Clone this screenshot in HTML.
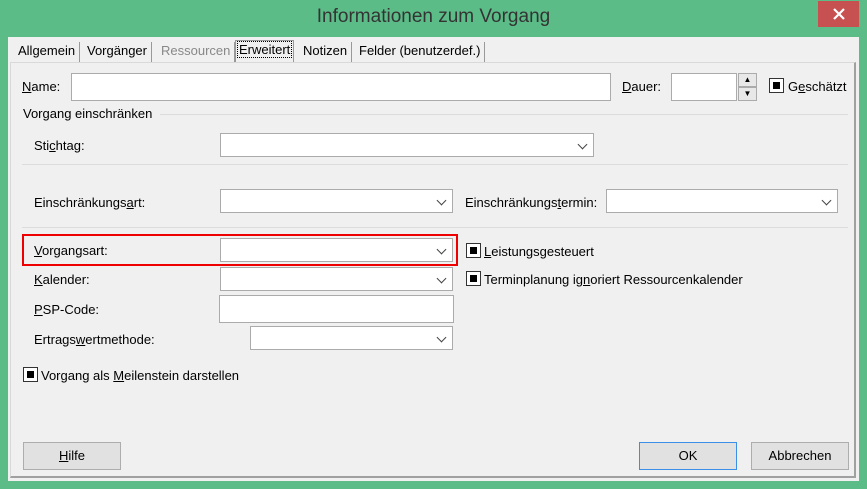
<!DOCTYPE html>
<html><head><meta charset="utf-8"><style>
*{margin:0;padding:0;box-sizing:border-box}
body{width:867px;height:489px;background:#5cbc88;font-family:"Segoe UI","Liberation Sans",sans-serif;font-size:12.5px;color:#000;position:relative;overflow:hidden}
.a{position:absolute}
.title{left:0;top:6px;width:867px;text-align:center;font-size:19px;color:#333}
.close{left:818px;top:1px;width:41px;height:26px;background:#c75050;color:#fff;text-align:center;font-size:16px;line-height:26px}
.client{left:8px;top:37px;width:851px;height:444px;background:#f0f0f0}
.panel{left:10px;top:62px;width:846px;height:416px;border:1px solid #d9d9d9;border-right:2px solid #a0a0a0;border-bottom:2px solid #a0a0a0;background:#f0f0f0}
.tab{top:42px;height:20px;line-height:18px;padding:0 4px;border-right:1px solid #999;font-size:13px}
.inp{background:#fff;border:1px solid #ababab}
.dd::after{content:"";position:absolute;right:7px;top:7px;width:6px;height:6px;border-right:1.5px solid #444;border-bottom:1.5px solid #444;transform:rotate(45deg)}
.lbl{font-size:13px}
.hr{height:1px;background:#dcdcdc}
.cb{width:15px;height:15px;border:1px solid #333;background:#fff}
.cb::after{content:"";position:absolute;left:3px;top:3px;width:7px;height:7px;background:#000}
.btn{border:1px solid #adadad;background:#e1e1e1;text-align:center;line-height:25px;font-size:13px}
u{text-decoration:underline}
</style></head><body>
<div class="a title">Informationen zum Vorgang</div>
<div class="a close"><svg width="12" height="12" style="margin-top:7px" viewBox="0 0 12 12"><path d="M1 1L11 11M11 1L1 11" stroke="#fff" stroke-width="2.2"/></svg></div>
<div class="a client"></div>
<div class="a panel"></div>
<div class="a tab" style="left:14px">Allgemein</div>
<div class="a tab" style="left:83px">Vorgänger</div>
<div class="a tab" style="left:157px;color:#888">Ressourcen</div>
<div class="a tab" style="left:235px;top:40px;height:22px;background:#f0f0f0;border:1px solid #999;border-bottom:none;padding:0 2px"><span style="outline:1px dotted #000;padding:0 1px">Erweitert</span></div>
<div class="a tab" style="left:299px">Notizen</div>
<div class="a tab" style="left:355px">Felder (benutzerdef.)</div>

<div class="a lbl" style="left:22px;top:79px"><u>N</u>ame:</div>
<div class="a inp" style="left:71px;top:73px;width:540px;height:28px"></div>
<div class="a lbl" style="left:622px;top:79px"><u>D</u>auer:</div>
<div class="a inp" style="left:671px;top:73px;width:66px;height:28px"></div>
<div class="a" style="left:738px;top:73px;width:19px;height:14px;border:1px solid #ababab;background:#e8e8e8;font-size:8px;text-align:center;line-height:12px">▲</div>
<div class="a" style="left:738px;top:87px;width:19px;height:14px;border:1px solid #ababab;background:#e8e8e8;font-size:8px;text-align:center;line-height:12px">▼</div>
<div class="a cb" style="left:769px;top:78px"></div>
<div class="a lbl" style="left:788px;top:79px">G<u>e</u>schätzt</div>

<div class="a lbl" style="left:23px;top:106px">Vorgang einschränken</div>
<div class="a hr" style="left:160px;top:114px;width:688px"></div>
<div class="a lbl" style="left:34px;top:138px">Sti<u>c</u>htag:</div>
<div class="a inp dd" style="left:220px;top:133px;width:374px;height:24px"></div>
<div class="a hr" style="left:22px;top:164px;width:826px"></div>
<div class="a lbl" style="left:34px;top:195px">Einschränkungs<u>a</u>rt:</div>
<div class="a inp dd" style="left:220px;top:189px;width:233px;height:24px"></div>
<div class="a lbl" style="left:465px;top:195px">Einschränkungs<u>t</u>ermin:</div>
<div class="a inp dd" style="left:606px;top:189px;width:232px;height:24px"></div>
<div class="a hr" style="left:22px;top:227px;width:826px"></div>

<div class="a" style="left:22px;top:234px;width:436px;height:32px;border:2px solid #e00"></div>
<div class="a lbl" style="left:34px;top:243px"><u>V</u>organgsart:</div>
<div class="a inp dd" style="left:220px;top:238px;width:233px;height:24px"></div>
<div class="a cb" style="left:466px;top:243px"></div>
<div class="a lbl" style="left:484px;top:244px"><u>L</u>eistungsgesteuert</div>
<div class="a lbl" style="left:34px;top:272px"><u>K</u>alender:</div>
<div class="a inp dd" style="left:220px;top:267px;width:233px;height:24px"></div>
<div class="a cb" style="left:466px;top:271px"></div>
<div class="a lbl" style="left:484px;top:272px">Terminplanung ig<u>n</u>oriert Ressourcenkalender</div>
<div class="a lbl" style="left:34px;top:302px"><u>P</u>SP-Code:</div>
<div class="a inp" style="left:219px;top:295px;width:235px;height:28px"></div>
<div class="a lbl" style="left:34px;top:332px">Ertrags<u>w</u>ertmethode:</div>
<div class="a inp dd" style="left:250px;top:326px;width:203px;height:24px"></div>
<div class="a cb" style="left:23px;top:367px"></div>
<div class="a lbl" style="left:41px;top:368px">Vorgang als <u>M</u>eilenstein darstellen</div>

<div class="a btn" style="left:23px;top:442px;width:98px;height:28px"><u>H</u>ilfe</div>
<div class="a btn" style="left:639px;top:442px;width:98px;height:28px;border-color:#3c8fe6">OK</div>
<div class="a btn" style="left:751px;top:442px;width:98px;height:28px">Abbrechen</div>
</body></html>
